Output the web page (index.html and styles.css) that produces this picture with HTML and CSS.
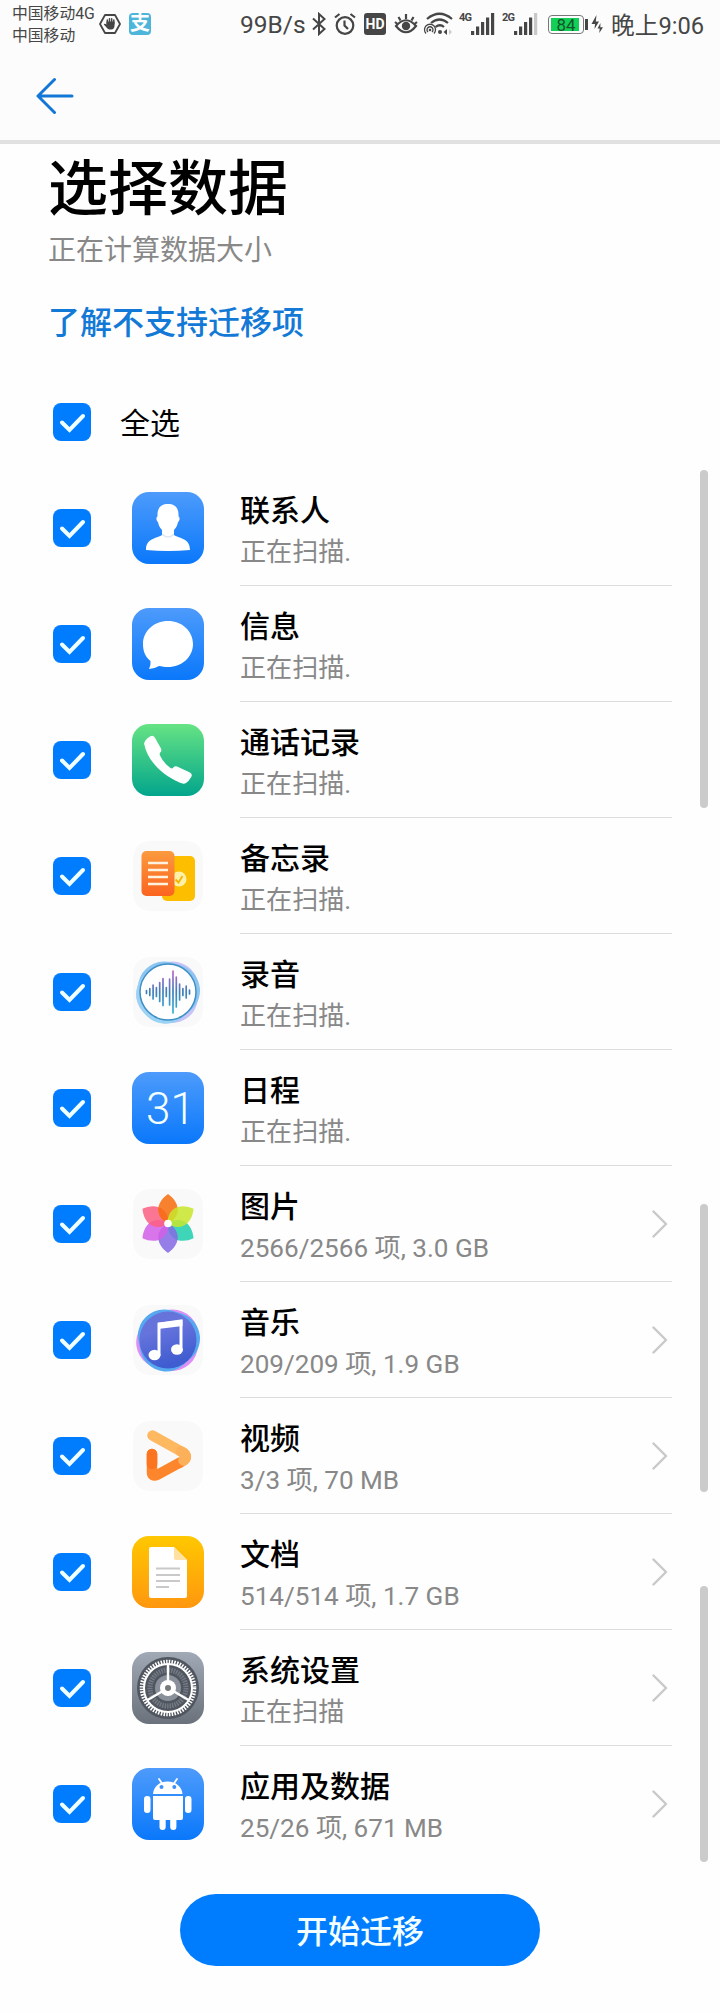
FILE: index.html
```html
<!DOCTYPE html>
<html lang="zh-CN">
  <head>
    <meta charset="UTF-8" />
    <meta name="viewport" content="width=device-width, initial-scale=1.0" />
    <title>选择数据</title>
    <link rel="stylesheet" href="styles.css">
  </head>
  <body>
    <!-- shared shapes -->
    <svg class="defs" width="0" height="0">
      <defs>
        <linearGradient id="blue" x1="0" y1="0" x2="0" y2="1">
          <stop offset="0" stop-color="#4d9bfb" />
          <stop offset="1" stop-color="#0a78fb" />
        </linearGradient>
        <linearGradient id="green" x1="0" y1="0" x2="0" y2="1">
          <stop offset="0" stop-color="#66e384" />
          <stop offset="1" stop-color="#02a58c" />
        </linearGradient>
        <linearGradient id="amber" x1="0" y1="0" x2="0" y2="1">
          <stop offset="0" stop-color="#ffc800" />
          <stop offset="1" stop-color="#ff970f" />
        </linearGradient>
        <linearGradient id="grey" x1="0" y1="0" x2="0" y2="1">
          <stop offset="0" stop-color="#a0a9b5" />
          <stop offset="1" stop-color="#6a717b" />
        </linearGradient>
        <linearGradient id="orange" x1="0" y1="0" x2="0" y2="1">
          <stop offset="0" stop-color="#fb9a3e" />
          <stop offset="1" stop-color="#fb6420" />
        </linearGradient>
        <linearGradient id="wave" gradientUnits="userSpaceOnUse" x1="0" y1="14" x2="0" y2="58">
          <stop offset="0" stop-color="#c565cf" />
          <stop offset="0.5" stop-color="#3c7fb8" />
          <stop offset="1" stop-color="#35b5d8" />
        </linearGradient>
        <linearGradient id="disc" x1="0" y1="0" x2="0.3" y2="1">
          <stop offset="0" stop-color="#6774d8" />
          <stop offset="0.4" stop-color="#6573dc" />
          <stop offset="1" stop-color="#3f5cd0" />
        </linearGradient>
        <path id="petal" d="M36 6C30 10 25.500 17 26.300 23C27 29 31 33.500 36 35.500C41 33.500 45 29 45.700 23C46.500 17 42 10 36 6Z" />
      </defs>
      <symbol id="check" viewBox="0 0 38 38">
        <rect width="38" height="38" rx="8" fill="#007dff" />
        <path d="M9 19.5L16.5 27L30 13" fill="none" stroke="#f0ffff" stroke-width="4" stroke-linecap="round" />
      </symbol>
      <symbol id="arrow" viewBox="0 0 16 28">
        <path d="M1.5 1.5L14 14L1.5 26.5" fill="none" stroke="#c9c9c9" stroke-width="2.4" stroke-linecap="round" stroke-linejoin="round" />
      </symbol>
    </svg>

    <header class="header">
      <div class="status-bar">
        <div class="carriers">
          <p>中国移动4G</p>
          <p>中国移动</p>
        </div>
        <svg class="st-hand" width="22" height="22" viewBox="0 0 22 22">
          <path d="M6 2H16L21 11L16 20H6L1 11Z" fill="none" stroke="#464646" stroke-width="1.8" stroke-linejoin="round" />
          <path d="M7.500 8.500H15.500V12.500Q15.500 16.500 12 16.500H10.500Q9 16.500 7.500 14.500L4.800 11.500Q5.500 10.200 7.500 11.500Z" fill="#464646" />
          <path d="M8.300 11V7M10.500 11V5.800M12.700 11V5.800M14.800 11V7" stroke="#464646" stroke-width="1.500" stroke-linecap="round" />
        </svg>
        <div class="st-pay">支</div>
        <p class="speed">99B/s</p>
        <svg class="st-bt" width="14" height="24" viewBox="0 0 14 24">
          <path d="M1 6.5L12.5 17L7 22V2L12.5 7L1 17.5" fill="none" stroke="#464646" stroke-width="2" />
        </svg>
        <svg class="st-alarm" width="22" height="22" viewBox="0 0 22 22" fill="none" stroke="#464646" stroke-width="2.2">
          <circle cx="11" cy="12.5" r="8.3" />
          <path d="M1 4.5L5.5 1M21 4.5L16.5 1M10.5 7.5V12.5L14 16" />
        </svg>
        <div class="st-hd">HD</div>
        <svg class="st-eye" width="24" height="22" viewBox="0 0 24 22" fill="none" stroke="#464646" stroke-width="2.200">
          <path d="M2 13Q12 1.5 22 13Q12 25.500 2 13Z" />
          <path d="M12 1V6M4.500 4L6.500 7.500M19.500 4L17.500 7.500M1 9L3.500 11M23 9L20.500 11" />
          <circle cx="12" cy="13" r="4.2" fill="#464646" stroke="none" />
        </svg>
        <svg class="st-wifi" width="30" height="24" viewBox="0 0 30 24" fill="none" stroke="#464646">
          <path d="M4 7Q16.500 -3.500 29 7M8 11Q16.500 4 25 11M12.500 15Q17 11.500 21 15" stroke-width="2.2" />
          <path d="M3 21.500A5.500 5.500 0 1 1 11 21.500M5 20A3 3 0 1 1 9 20" stroke-width="1.300" />
          <circle cx="7" cy="18" r="1.300" fill="#464646" stroke="none" />
          <circle cx="17" cy="20" r="2" fill="#464646" stroke="none" />
          <path d="M24 17V23L20.500 20Z" fill="#464646" stroke="none" />
          <path d="M26 17V23L29 20Z" fill="#ccc" stroke="none" />
        </svg>
        <p class="net">4G</p>
        <svg class="st-signal" width="24" height="22" viewBox="0 0 24 22" fill="#464646">
          <rect x="0" y="18" width="3.200" height="4" />
          <rect x="5" y="13.500" width="3.200" height="8.500" />
          <rect x="10" y="9" width="3.200" height="13" />
          <rect x="15" y="4.500" width="3.200" height="17.500" />
          <rect x="20" y="0" width="3.200" height="22" />
        </svg>
        <p class="net net-2g">2G</p>
        <svg class="st-signal" width="24" height="22" viewBox="0 0 24 22" fill="#464646">
          <rect x="0" y="18" width="3.200" height="4" />
          <rect x="5" y="13.500" width="3.200" height="8.500" />
          <rect x="10" y="9" width="3.200" height="13" />
          <rect x="15" y="4.500" width="3.200" height="17.500" />
          <rect x="20" y="0" width="3.200" height="22" fill="#c8c8c8" />
        </svg>
        <div class="battery">84</div>
        <svg class="st-bolt" width="18" height="20" viewBox="0 0 18 20" fill="#464646">
          <rect x="0" y="5" width="3" height="11" />
          <path d="M11.500 1L6.500 10H10L9.500 15L14 7.500H10.800Z" />
          <path d="M15.500 9L12.500 14.500H14.700L14.300 19L18 13.200H15.300Z" />
        </svg>
        <p class="time">晚上9:06</p>
      </div>

      <div class="nav">
        <svg width="38" height="38" viewBox="0 0 38 38">
          <path d="M18.500 2.500L2 19L18.500 35.500M2 19H36" fill="none" stroke="#1277d6" stroke-width="3" stroke-linecap="round" stroke-linejoin="round" />
        </svg>
      </div>
    </header>

    <main>
      <h1>选择数据</h1>
      <p class="sub">正在计算数据大小</p>
      <a class="link">了解不支持迁移项</a>

      <div class="select-all">
        <svg class="check"><use href="#check" /></svg>
        <p>全选</p>
      </div>

      <div class="list-box">
        <ul class="list">
          <li class="item">
            <svg class="check"><use href="#check" /></svg>
            <svg class="icon" viewBox="0 0 72 72">
              <rect width="72" height="72" rx="17" fill="url(#blue)" />
              <path d="M14 58C14 46 24 47 30 43V38C27 35 26.500 32 26 30C24 29 24 25 25.500 24.500C25 16 29 12 36 12S47 16 46.500 24.500C48 25 48 29 46 30C45.500 32 45 35 42 38V43C48 47 58 46 58 58Q36 60 14 58Z" fill="#fff" />
              <path d="M30.500 41.500Q36 47 41.500 41.500L42 43Q36 48.500 30 43Z" fill="#dfe5f3" />
            </svg>
            <div class="info">
              <div class="text"><h2>联系人</h2><p>正在扫描.</p></div>
            </div>
          </li>
          <li class="item">
            <svg class="check"><use href="#check" /></svg>
            <svg class="icon" viewBox="0 0 72 72">
              <rect width="72" height="72" rx="17" fill="url(#blue)" />
              <path d="M36 13C50 13 61 23 61 36S50 59 36 59C32 59 30 58.500 27 58Q22 61 17 61Q19 57 18.500 53C13 48.500 11 43 11 36C11 23 22 13 36 13Z" fill="#fff" />
            </svg>
            <div class="info">
              <div class="text"><h2>信息</h2><p>正在扫描.</p></div>
            </div>
          </li>
          <li class="item">
            <svg class="check"><use href="#check" /></svg>
            <svg class="icon" viewBox="0 0 72 72">
              <rect width="72" height="72" rx="17" fill="url(#green)" />
              <path d="M18 12.500Q21 10.500 22.800 13.500L29 24.500Q30 27 28.200 28.500Q27.300 29.500 28 31.500Q31.500 39 38.500 44Q40 45 41.300 43.500Q43 41.700 45 42.500L57.500 48.200Q61 50 59.200 53Q57 57 54 59Q51.500 60.500 47.500 58.500C28 50 15 35 12.200 20Q11.800 16.500 18 12.500Z" fill="#fff" />
            </svg>
            <div class="info">
              <div class="text"><h2>通话记录</h2><p>正在扫描.</p></div>
            </div>
          </li>
          <li class="item">
            <svg class="check"><use href="#check" /></svg>
            <svg class="icon" viewBox="0 0 72 72">
              <rect x="1" y="1" width="70" height="70" rx="17" fill="#f9f9f9" />
              <rect x="30" y="16" width="33" height="45" rx="5" fill="#fdbe00" />
              <circle cx="47" cy="39" r="7.500" fill="#fff0a8" />
              <path d="M43.500 39.500L46.500 42.500L50.500 36" fill="none" stroke="#f5b400" stroke-width="1.800" />
              <rect x="9.500" y="11" width="33" height="45" rx="5" fill="url(#orange)" />
              <path d="M16 23H36M16 30H36M16 37H36M16 44H36" stroke="#fff3e0" stroke-width="2.400" />
            </svg>
            <div class="info">
              <div class="text"><h2>备忘录</h2><p>正在扫描.</p></div>
            </div>
          </li>
          <li class="item">
            <svg class="check"><use href="#check" /></svg>
            <svg class="icon" viewBox="0 0 72 72">
              <rect x="1" y="1" width="70" height="70" rx="17" fill="#f9f9f9" />
              <g stroke-width="52" stroke-linejoin="round">
                <path d="M30.200 38.500L40.500 31.500L40 41Z" fill="#c8c4f8" stroke="#c8c4f8" />
                <path d="M32 31.500L42 34.500L34 41.500Z" fill="#8cc4f2" stroke="#8cc4f2" />
                <path d="M30.200 38L34 35L33 41.500Z" fill="#9bd3f4" stroke="#9bd3f4" />
              </g>
              <circle cx="36" cy="36" r="28" fill="#fff" stroke="#3f8fc4" stroke-width="1.500" />
              <path d="M14.500 34.500V37.500M17.800 32.500V39.500M21.100 29V43M24.400 31.500V40.500M27.700 26.500V45.500M31 22.500V49.500M34.300 31.500V40.500M37.600 23V49M41 15V57M44.300 21V51M47.600 28V44M50.900 32.500V39.500M54.200 30V42M57.500 34V38" stroke="url(#wave)" stroke-width="1.700" stroke-linecap="round" />
            </svg>
            <div class="info">
              <div class="text"><h2>录音</h2><p>正在扫描.</p></div>
            </div>
          </li>
          <li class="item">
            <svg class="check"><use href="#check" /></svg>
            <svg class="icon" viewBox="0 0 72 72">
              <rect width="72" height="72" rx="17" fill="url(#blue)" />
              <text class="day" x="38.500" y="51.500" text-anchor="middle">31</text>
            </svg>
            <div class="info">
              <div class="text"><h2>日程</h2><p>正在扫描.</p></div>
            </div>
          </li>
          <li class="item">
            <svg class="check"><use href="#check" /></svg>
            <svg class="icon" viewBox="0 0 72 72">
              <rect x="1" y="1" width="70" height="70" rx="17" fill="#f9f9f9" />
              <g class="petals">
                <use href="#petal" fill="#1fcfae" transform="rotate(120 36 35.500)" />
                <use href="#petal" fill="#8468e4" transform="rotate(180 36 35.500)" />
                <use href="#petal" fill="#d45ee8" transform="rotate(240 36 35.500)" />
                <use href="#petal" fill="#fb5f80" transform="rotate(300 36 35.500)" />
                <use href="#petal" fill="#f76c0c" />
                <use href="#petal" fill="#c8e62c" transform="rotate(60 36 35.500)" />
              </g>
              <circle cx="36" cy="35.500" r="3.800" fill="#fff" />
            </svg>
            <div class="info">
              <div class="text"><h2>图片</h2><p>2566/2566 项, 3.0 GB</p></div>
              <svg class="arrow"><use href="#arrow" /></svg>
            </div>
          </li>
          <li class="item">
            <svg class="check"><use href="#check" /></svg>
            <svg class="icon" viewBox="0 0 72 72">
              <rect x="1" y="1" width="70" height="70" rx="17" fill="#f9f9f9" />
              <g stroke-width="52" stroke-linejoin="round">
                <path d="M30.200 38.500L40.500 31.500L40 41Z" fill="#dd8ff5" stroke="#dd8ff5" />
                <path d="M32 31.500L42 34.500L34 41.500Z" fill="#56a8f0" stroke="#56a8f0" />
              </g>
              <circle cx="36" cy="36" r="28.500" fill="url(#disc)" />
              <path d="M27 52V20L49 17V43" fill="none" stroke="#fff" stroke-width="3" />
              <path d="M26 18.800L50.500 16V22L26 25Z" fill="#fff" />
              <ellipse cx="22.500" cy="51" rx="6" ry="5.200" fill="#fff" />
              <ellipse cx="45" cy="45.500" rx="6" ry="5.200" fill="#fff" />
            </svg>
            <div class="info">
              <div class="text"><h2>音乐</h2><p>209/209 项, 1.9 GB</p></div>
              <svg class="arrow"><use href="#arrow" /></svg>
            </div>
          </li>
          <li class="item">
            <svg class="check"><use href="#check" /></svg>
            <svg class="icon" viewBox="0 0 72 72">
              <rect x="1" y="1" width="70" height="70" rx="17" fill="#f9f9f9" />
              <g fill="none" stroke-width="10.500" stroke-linecap="round" stroke-linejoin="round">
                <path d="M20.500 15.500L51 32.500Q56.500 36.500 51 41L48 43" stroke="#fdb860" />
                <path d="M20 34V52Q20 57 25 55L48 42.500" stroke="#fd862c" />
                <path d="M20 34V44" stroke="#fb7420" />
                <path d="M49 31.500L51 32.500Q56.500 36.500 51.500 40.500" stroke="#fdb05a" />
              </g>
            </svg>
            <div class="info">
              <div class="text"><h2>视频</h2><p>3/3 项, 70 MB</p></div>
              <svg class="arrow"><use href="#arrow" /></svg>
            </div>
          </li>
          <li class="item">
            <svg class="check"><use href="#check" /></svg>
            <svg class="icon" viewBox="0 0 72 72">
              <rect width="72" height="72" rx="17" fill="url(#amber)" />
              <path d="M19 11H42L55 24V60Q55 62 53 62H19Q17 62 17 60V13Q17 11 19 11Z" fill="#fff" />
              <path d="M42 11L55 24H44Q42 24 42 22Z" fill="#ffe2a3" />
              <path d="M24 32.500H48M24 39H48M24 45H48M24 51H37" stroke="#c9c9c9" stroke-width="2" />
            </svg>
            <div class="info">
              <div class="text"><h2>文档</h2><p>514/514 项, 1.7 GB</p></div>
              <svg class="arrow"><use href="#arrow" /></svg>
            </div>
          </li>
          <li class="item">
            <svg class="check"><use href="#check" /></svg>
            <svg class="icon" viewBox="0 0 72 72">
              <rect width="72" height="72" rx="17" fill="url(#grey)" />
              <circle cx="36" cy="36" r="31" fill="#50565f" />
              <g fill="none">
                <circle cx="36" cy="36" r="18" stroke="#737a83" stroke-width="5" stroke-dasharray="1.500 1" />
                <circle cx="36" cy="36" r="13" fill="#8a9099" />
                <circle cx="36" cy="36" r="26.300" stroke="#fff" stroke-width="4" stroke-dasharray="1.500 1.254" />
                <circle cx="36" cy="36" r="24" stroke="#fff" stroke-width="2" />
                <path d="M36 36V12M36 36L15.500 48M36 36L56.500 48" stroke="#fff" stroke-width="2.400" />
              </g>
              <circle cx="36" cy="36" r="8" fill="#fff" />
              <circle cx="36" cy="36" r="3" fill="#77787a" />
            </svg>
            <div class="info">
              <div class="text"><h2>系统设置</h2><p>正在扫描</p></div>
              <svg class="arrow"><use href="#arrow" /></svg>
            </div>
          </li>
          <li class="item">
            <svg class="check"><use href="#check" /></svg>
            <svg class="icon" viewBox="0 0 72 72">
              <rect width="72" height="72" rx="17" fill="url(#blue)" />
              <g fill="#fff">
                <path d="M21 26C21.500 19 27 13.500 35.500 13.500S50 19 50.500 26Z" />
                <path d="M21 28H51V50Q51 52 49 52H23Q21 52 21 50Z" />
                <rect x="12" y="28" width="6.500" height="17" rx="3.200" />
                <rect x="53" y="28" width="6.500" height="17" rx="3.200" />
                <rect x="27.500" y="46" width="6.200" height="16" rx="3" />
                <rect x="38.200" y="46" width="6.200" height="16" rx="3" />
              </g>
              <path d="M27 11L30.500 16M45 11L41.500 16" stroke="#fff" stroke-width="1.800" stroke-linecap="round" />
              <circle cx="29.500" cy="19" r="2" fill="#3d91fb" />
              <circle cx="42.300" cy="19" r="2" fill="#3d91fb" />
            </svg>
            <div class="info">
              <div class="text"><h2>应用及数据</h2><p>25/26 项, 671 MB</p></div>
              <svg class="arrow"><use href="#arrow" /></svg>
            </div>
          </li>
        </ul>
        <div class="rail">
          <div class="thumb thumb-1"></div>
          <div class="thumb thumb-2"></div>
          <div class="thumb thumb-3"></div>
        </div>
      </div>

      <button class="start">开始迁移</button>
    </main>
  </body>
</html>
```

FILE: styles.css
```css
* {
  margin: 0;
  padding: 0;
  box-sizing: border-box;
}

body {
  width: 720px;
  height: 2014px;
  background-color: #fefefe;
  font-family: Roboto, "Noto Sans CJK SC", sans-serif;
  color: #000;
  overflow: hidden;
}

svg {
  display: block;
  flex-shrink: 0;
}

.defs {
  height: 0;
}

.header {
  height: 144px;
  background-color: #fcfcfc;
  border-bottom: 4px solid #e1e1e1;
}

/* status bar */
.status-bar {
  height: 48px;
  display: flex;
  align-items: center;
  padding-left: 12px;
  color: #464646;
  white-space: nowrap;
}

.carriers {
  width: 84px;
  font-size: 15.8px;
  line-height: 22px;
  padding-top: 2px;
}

.st-hand {
  margin-left: 3px;
}

.st-pay {
  width: 22px;
  height: 22px;
  margin-left: 8px;
  border-radius: 4px;
  background-color: #4cb5d9;
  color: #fff;
  font-size: 20px;
  font-weight: 700;
  line-height: 21px;
  text-align: center;
}

.speed {
  width: 64px;
  margin-left: 89px;
  font-size: 24.5px;
}

.st-bt {
  margin-left: 8px;
}

.st-alarm {
  margin-left: 8px;
}

.st-hd {
  width: 22px;
  height: 22px;
  margin-left: 8px;
  border-radius: 3px;
  background-color: #464646;
  color: #fff;
  font-size: 14px;
  font-weight: 700;
  line-height: 22px;
  text-align: center;
}

.st-eye {
  margin-left: 8px;
}

.st-wifi {
  margin-left: 5px;
}

.net {
  width: 12px;
  height: 22px;
  font-size: 11px;
  font-weight: 700;
  line-height: 10px;
  letter-spacing: -0.8px;
  margin-left: 6px;
}

.net-2g {
  margin-left: 7px;
}

.battery {
  width: 36px;
  height: 19px;
  margin-left: 10px;
  border: 1px solid #777;
  border-radius: 4px;
  background: linear-gradient(90deg, #12cf57 0 28px, #fff 28px) 2px 2px / 32px 13px no-repeat;
  font-size: 17px;
  line-height: 18px;
  text-align: center;
  color: #14542a;
}

.st-bolt {
  margin-left: 1px;
}

.time {
  margin-left: 8px;
  font-size: 23.7px;
}

.nav {
  padding: 29px 0 0 36px;
}

/* title */
main {
  padding-left: 48px;
}

h1 {
  font-size: 60px;
  font-weight: 500;
  line-height: 84px;
  padding-top: 4px;
}

.sub {
  font-size: 28px;
  line-height: 37px;
  color: #888;
}

.link {
  display: block;
  margin-top: 33px;
  font-size: 32px;
  font-weight: 500;
  line-height: 42px;
  color: #1379d6;
}

.select-all {
  height: 96px;
  margin-top: 30px;
  padding-left: 5px;
  display: flex;
  align-items: center;
  gap: 29px;
  font-size: 30px;
}

.select-all p {
  padding-bottom: 2px;
}

.check {
  width: 38px;
  height: 38px;
}

/* list */
.list-box {
  display: flex;
  gap: 28px;
}

.list {
  width: 624px;
  list-style: none;
}

.item {
  height: 116px;
  padding-left: 5px;
  display: flex;
  align-items: center;
}

.icon {
  width: 72px;
  height: 72px;
  margin: 0 36px 0 41px;
}

.day {
  font-size: 44px;
  font-weight: 300;
  fill: #f4ffff;
}

.petals use {
  opacity: 0.85;
}

.info {
  flex: 1;
  height: 116px;
  padding-right: 4px;
  display: flex;
  align-items: center;
  justify-content: space-between;
  border-bottom: 1px solid #dcdcdc;
}

.item:last-child .info {
  border-bottom-color: transparent;
}

.text {
  padding-top: 6px;
}

.text h2 {
  font-size: 30px;
  font-weight: 500;
  line-height: 42px;
}

.text p {
  font-size: 26.1px;
  line-height: 40px;
  color: #888;
}

.arrow {
  width: 16px;
  height: 28px;
}

.rail {
  width: 8px;
}

.thumb {
  border-radius: 4px;
  background-color: #cbcbcb;
}

.thumb-1 {
  height: 338px;
}

.thumb-2 {
  height: 288px;
  margin-top: 396px;
}

.thumb-3 {
  height: 276px;
  margin-top: 94px;
}

.start {
  display: block;
  width: 360px;
  height: 72px;
  margin: 32px 0 0 132px;
  padding-bottom: 2px;
  border: none;
  border-radius: 36px;
  background-color: #007dff;
  color: #f4ffff;
  font-family: inherit;
  font-size: 32px;
  font-weight: 500;
}
```
